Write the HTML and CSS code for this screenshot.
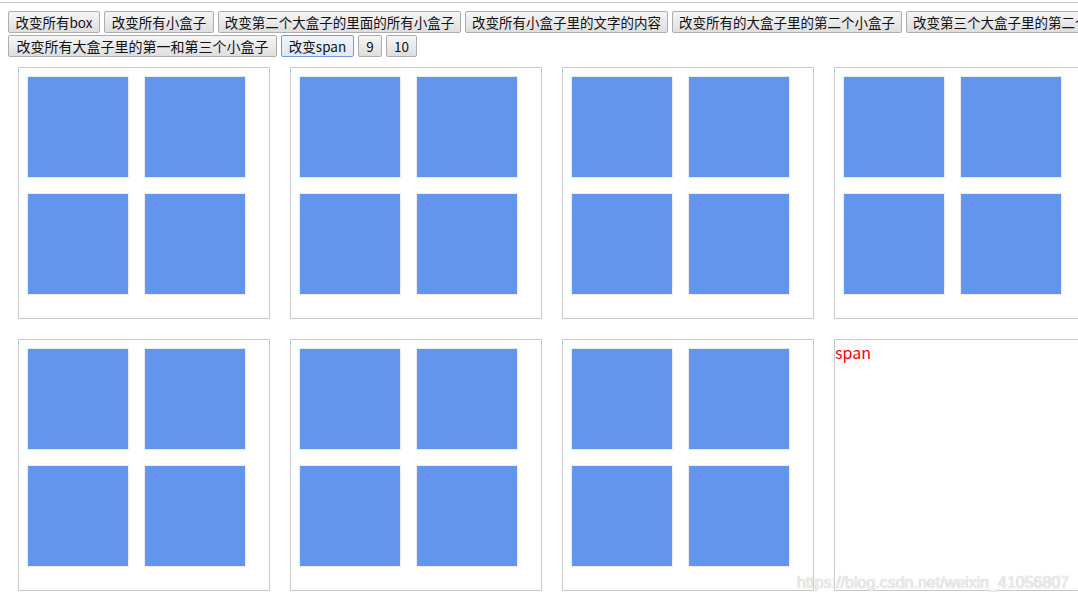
FILE: index.html
```html
<!DOCTYPE html>
<html lang="zh">
<head>
<meta charset="utf-8">
<title>jQuery 选择器</title>
<link rel="stylesheet" href="styles.css">
</head>
<body>
<div class="frame">
  <div class="toolbar">
    <div class="btn-row row-one">
      <button class="btn">改变所有box</button>
      <button class="btn">改变所有小盒子</button>
      <button class="btn">改变第二个大盒子的里面的所有小盒子</button>
      <button class="btn">改变所有小盒子里的文字的内容</button>
      <button class="btn">改变所有的大盒子里的第二个小盒子</button>
      <button class="btn">改变第三个大盒子里的第二个小盒子</button>
    </div>
    <div class="btn-row row-two">
      <button class="btn">改变所有大盒子里的第一和第三个小盒子</button>
      <button class="btn btn-focus">改变span</button>
      <button class="btn">9</button>
      <button class="btn">10</button>
    </div>
  </div>
  <div class="boxes">
    <div class="box"><div class="small"></div><div class="small"></div><div class="small"></div><div class="small"></div></div>
    <div class="box"><div class="small"></div><div class="small"></div><div class="small"></div><div class="small"></div></div>
    <div class="box"><div class="small"></div><div class="small"></div><div class="small"></div><div class="small"></div></div>
    <div class="box"><div class="small"></div><div class="small"></div><div class="small"></div><div class="small"></div></div>
    <div class="box"><div class="small"></div><div class="small"></div><div class="small"></div><div class="small"></div></div>
    <div class="box"><div class="small"></div><div class="small"></div><div class="small"></div><div class="small"></div></div>
    <div class="box"><div class="small"></div><div class="small"></div><div class="small"></div><div class="small"></div></div>
    <div class="box box-text"><span class="red">span</span></div>
  </div>
</div>
<div class="watermark">https://blog.csdn.net/weixin_41056807</div>
</body>
</html>
```

FILE: styles.css
```css
html, body {
  margin: 0;
  padding: 0;
  background: #ffffff;
  overflow: hidden;
  width: 1078px;
  height: 603px;
}

body {
  position: relative;
  font-family: "Noto Sans CJK SC", "Noto Sans", sans-serif;
}

.frame {
  margin-top: 2px;
  border-top: 1px solid #c6c6c6;
  padding: 8px 0 0 8px;
  width: 1200px;
}

.btn-row {
  display: flex;
  gap: 4px;
  flex-wrap: nowrap;
}

.row-two {
  margin-top: 2px;
}

.btn {
  box-sizing: border-box;
  height: 22px;
  padding: 0;
  margin: 0;
  border: 1px solid #adadad;
  border-radius: 2px;
  background: linear-gradient(#f6f6f6, #dedede);
  font-family: "Noto Sans CJK SC", "Noto Sans", sans-serif;
  font-size: 13.5px;
  line-height: 20px;
  color: #111;
  text-align: center;
  white-space: nowrap;
  flex: none;
  overflow: hidden;
}

.row-one .btn:nth-child(1) { width: 92px; }
.row-one .btn:nth-child(2) { width: 110px; }
.row-one .btn:nth-child(3) { width: 243px; }
.row-one .btn:nth-child(4) { width: 203px; }
.row-one .btn:nth-child(5) { width: 230px; }
.row-one .btn:nth-child(6) { width: 230px; }

.row-two .btn:nth-child(1) { width: 269px; font-size: 14px; }
.row-two .btn:nth-child(2) { width: 73px; }
.row-two .btn:nth-child(3) { width: 24px; }
.row-two .btn:nth-child(4) { width: 31px; }

.btn-focus {
  border-color: #6f9bdc;
  background: linear-gradient(#f1f6fc, #e0e8f2);
}

.boxes {
  display: flex;
  flex-wrap: wrap;
  width: 1088px;
}

.box {
  box-sizing: border-box;
  width: 252px;
  height: 252px;
  margin: 10px;
  border: 1px solid #c9c9c9;
  padding: 8px;
  display: grid;
  grid-template-columns: 102px 102px;
  grid-auto-rows: 102px;
  gap: 15px;
  align-content: start;
}

.small {
  box-sizing: border-box;
  border: 1px solid #ececec;
  background: #6495ed;
}

.box-text {
  display: block;
  padding: 0;
}

.red {
  color: #ff0000;
  font-size: 16px;
  line-height: 17px;
}

.watermark {
  position: absolute;
  left: 797px;
  top: 574px;
  font-family: "Liberation Sans", Arial, sans-serif;
  font-size: 16px;
  line-height: 18px;
  color: rgba(244, 244, 244, 0.9);
  text-shadow: 0 0 1px rgba(140, 140, 140, 0.7);
  white-space: nowrap;
}
```
